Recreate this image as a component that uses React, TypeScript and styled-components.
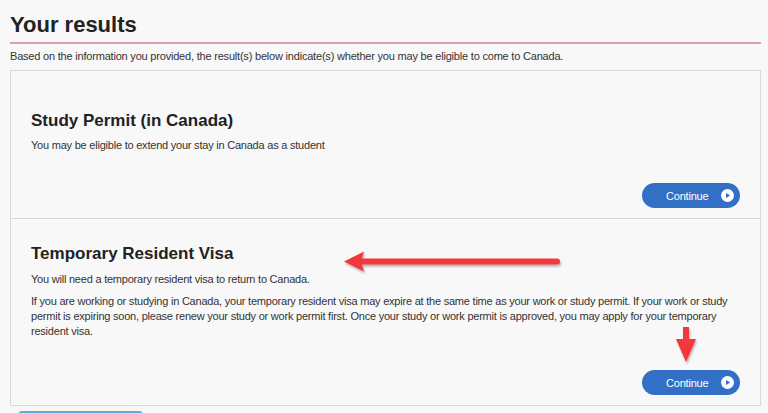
import React from "react";
import styled, { createGlobalStyle } from "styled-components";

const GlobalStyle = createGlobalStyle`
  html, body {
    margin: 0;
    padding: 0;
    background: #f8f8f8;
  }
  body {
    font-family: "Liberation Sans", Arial, sans-serif;
    color: #333;
  }
`;

const Page = styled.div`
  position: relative;
  width: 751px;
  padding: 12px 0 0 10px;
  overflow: hidden;
  height: 401px;
`;

const Title = styled.h1`
  margin: 0 0 4px;
  font-size: 22px;
  line-height: 26px;
  font-weight: bold;
  color: #222;
`;

const Rule = styled.div`
  height: 2px;
  background: #d9a2a6;
`;

const Intro = styled.p`
  margin: 5px 0 7px;
  font-size: 11px;
  line-height: 14px;
  letter-spacing: -0.2px;
  color: #333;
`;

const ResultList = styled.div`
  border: 1px solid #d9d9d9;
  background: #f8f8f8;
`;

const ResultCard = styled.section<{ $top: number }>`
  display: flex;
  flex-direction: column;
  padding: ${(p) => p.$top}px 20px 10px 20px;
  & + & {
    border-top: 1px solid #d6d6d6;
  }
`;

const CardTitle = styled.h2<{ $gap: number }>`
  margin: 0 0 ${(p) => p.$gap}px;
  font-size: 17px;
  line-height: 20px;
  font-weight: bold;
  color: #222;
`;

const CardText = styled.p<{ $gap?: number }>`
  margin: 0 0 ${(p) => p.$gap ?? 0}px;
  font-size: 11px;
  line-height: 15px;
  letter-spacing: -0.22px;
  color: #333;
`;

const Footer = styled.div<{ $gap: number }>`
  display: flex;
  justify-content: flex-end;
  margin-top: ${(p) => p.$gap}px;
`;

const ContinueButton = styled.button`
  display: flex;
  align-items: center;
  justify-content: space-between;
  width: 98px;
  height: 25px;
  padding: 0 6px 0 24px;
  border: none;
  border-radius: 13px;
  background: #3170c4;
  color: #fff;
  font-family: "Liberation Sans", Arial, sans-serif;
  font-size: 11px;
  letter-spacing: -0.2px;
  cursor: pointer;
`;

const PlayIcon = styled.svg`
  width: 13px;
  height: 13px;
  flex: none;
`;

const NextBar = styled.div`
  margin: 5px 0 0 8px;
  width: 125px;
  height: 12px;
  border-radius: 4px;
  background: #6fa3dc;
`;

const Annotation = styled.svg`
  position: absolute;
  left: 0;
  top: 0;
  pointer-events: none;
  overflow: visible;
`;

const Continue = () => (
  <ContinueButton>
    <span>Continue</span>
    <PlayIcon viewBox="0 0 13 13">
      <circle cx="6.5" cy="6.5" r="6.5" fill="#fff" />
      <path d="M5 4 L9.2 6.5 L5 9 Z" fill="#3170c4" />
    </PlayIcon>
  </ContinueButton>
);

export default function App() {
  return (
    <>
      <GlobalStyle />
      <Page>
        <Title>Your results</Title>
        <Rule />
        <Intro>
          Based on the information you provided, the result(s) below indicate(s) whether you may be
          eligible to come to Canada.
        </Intro>
        <ResultList>
          <ResultCard $top={40}>
            <CardTitle $gap={7}>Study Permit (in Canada)</CardTitle>
            <CardText>You may be eligible to extend your stay in Canada as a student</CardText>
            <Footer $gap={30}>
              <Continue />
            </Footer>
          </ResultCard>
          <ResultCard $top={25}>
            <CardTitle $gap={8}>Temporary Resident Visa</CardTitle>
            <CardText $gap={7}>You will need a temporary resident visa to return to Canada.</CardText>
            <CardText>
              If you are working or studying in Canada, your temporary resident visa may expire at the
              same time as your work or study permit. If your work or study permit is expiring soon,
              please renew your study or work permit first. Once your study or work permit is approved,
              you may apply for your temporary resident visa.
            </CardText>
            <Footer $gap={31}>
              <Continue />
            </Footer>
          </ResultCard>
        </ResultList>
        <NextBar />
        <Annotation width="768" height="413">
          <defs>
            <filter id="shadow" x="-10%" y="-50%" width="120%" height="200%">
              <feDropShadow dx="1" dy="2" stdDeviation="1.2" floodColor="#000" floodOpacity="0.3" />
            </filter>
          </defs>
          <g filter="url(#shadow)" fill="#f2373d" stroke="none">
            <path d="M360 258.5 L557 258.5 A3 3 0 0 1 557 264.5 L360 264.5 Z" />
            <path d="M344 261.5 L364 251.5 L361 261.5 L364 271.5 Z" />
            <path d="M683 327 L689 327 L689 341 L683 341 Z" />
            <path d="M676 339 L696 339 L686 362 Z" />
          </g>
        </Annotation>
      </Page>
    </>
  );
}
